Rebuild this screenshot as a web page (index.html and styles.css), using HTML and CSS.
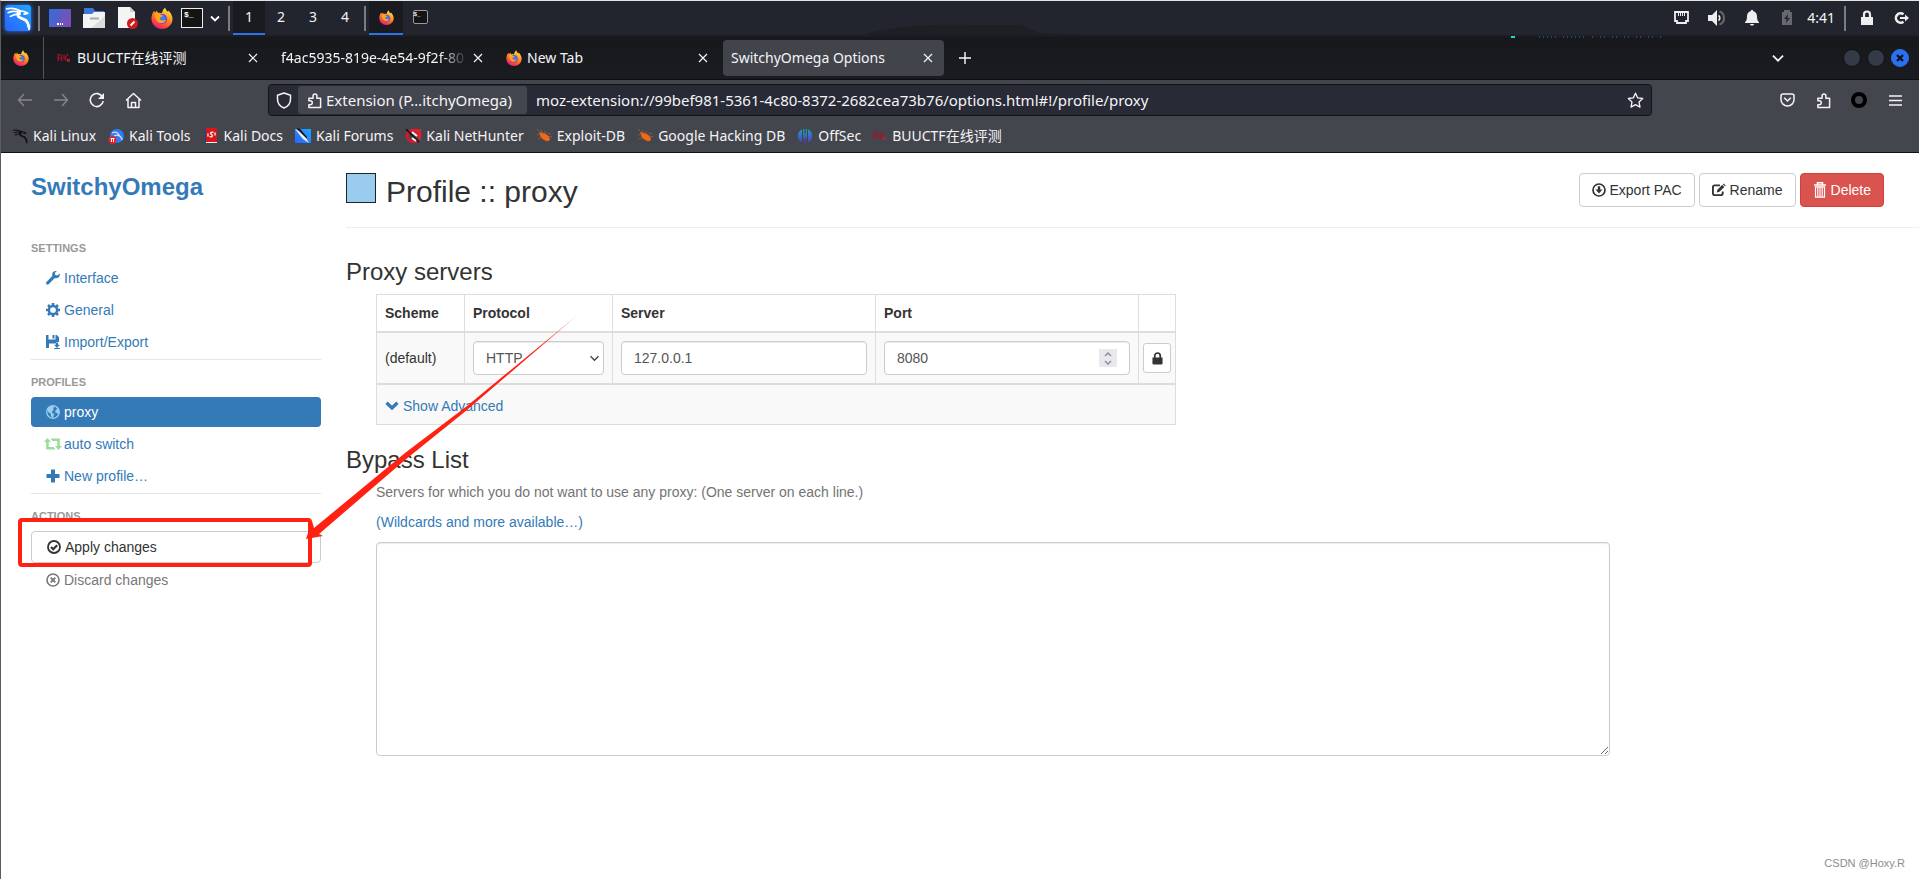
FILE: index.html
```html
<!DOCTYPE html>
<html lang="en">
<head>
<meta charset="utf-8">
<title>SwitchyOmega Options</title>
<link rel="stylesheet" href="styles.css">
</head>
<body>
<svg class="defs" aria-hidden="true">
  <defs>
    <linearGradient id="flame" x1="0.8" y1="0" x2="0.3" y2="1">
      <stop offset="0" stop-color="#fff04a"/><stop offset="0.4" stop-color="#ff9a1f"/><stop offset="0.75" stop-color="#ff4a3d"/><stop offset="1" stop-color="#e31587"/>
    </linearGradient>
    <linearGradient id="desk" x1="0" y1="0" x2="1" y2="0.4">
      <stop offset="0" stop-color="#2f6fdc"/><stop offset="1" stop-color="#7a4fb5"/>
    </linearGradient>
    <linearGradient id="blue" x1="0" y1="1" x2="1" y2="0">
      <stop offset="0" stop-color="#2a62ff"/><stop offset="1" stop-color="#1fa6ff"/>
    </linearGradient>
    <linearGradient id="sec" x1="0" y1="0" x2="0" y2="1">
      <stop offset="0" stop-color="#18a5b5"/><stop offset="1" stop-color="#5b2ed0"/>
    </linearGradient>
    <symbol id="firefox" viewBox="0 0 24 24">
      <path fill="url(#flame)" d="M15.5.5c.2 2.500 1.700 3.500 3 4.800.4-.3.600-.8.600-1.500 2.600 2.800 4.400 6 4.400 9.400C23.500 19.300 18.400 24 12 24S.5 19 .5 12.800c0-3.400 1-6.300 2.900-8.800l1 2.200 2-2.400c.2 1.200.7 2 1.400 2.500 1.500-.3 2.900 0 4 .5C12.500 4.500 13.500 2 15.500.5z"/>
      <circle cx="12" cy="13" r="5.500" fill="#5a4be0"/>
      <path fill="#3f7df0" d="M10 9.500c3-1 6 .5 6.500 3-1 2-4 3-6.500 1.500z"/>
      <path fill="#ffa51f" d="M4.500 7c2.500-.8 4.500 0 5.500 1.300l3 .7c-.3 1.800-2 2-3.300 2.600-.3 1.700 1 3 3 3 1.500 0 2.300-.7 3.500-.2-1 2.800-4.500 4-7.200 2.700C5.500 15.400 4 11 4.500 7z"/>
    </symbol>
    <symbol id="dragon" viewBox="0 0 24 24">
      <g fill="none" stroke="currentColor" stroke-linecap="round" stroke-linejoin="round">
        <path stroke-width="1.600" d="M1.500 3.500C7 2.500 11 3.500 14 6M3 7c4-1.500 8-1.200 11 .3M5 10.500c3-1.800 6-2 9-2"/>
        <path stroke-width="2.600" d="M13 5.500c-1.500 2.500-2 5 1.200 6.300 3.800 1.300 6.800 2.300 7.800 8.200"/>
        <path stroke-width="1.700" d="M13.500 5.500c3-.3 5 .5 7.500 2.200l-3.300.6M19 13.500c1.500 1.500 3 4.500 3.200 9"/>
      </g>
    </symbol>
    <symbol id="close" viewBox="0 0 10 10"><path d="M1 1l8 8M9 1L1 9" fill="none" stroke="currentColor" stroke-width="1.200"/></symbol>
    <symbol id="puzzle" viewBox="0 0 16 18"><path fill="none" stroke="currentColor" stroke-width="1.600" stroke-linejoin="round" d="M2 9.300V6.500h4.500V4a2 2 0 0 1 4 0v2.500H14.500V16.500H2v-3h1.500a2 2 0 0 0 0-4.200z"/></symbol>
    <symbol id="buu" viewBox="0 0 16 12"><path d="M1 1v9M1 2h3M1 6h3M5 2v8M8 2v6M10 3v6M12 1v3" fill="none" stroke="#a3122d" stroke-width="1.500"/><rect x="11.500" y="7" width="3.500" height="3.500" fill="#c01b3a"/></symbol>
    <symbol id="spider" viewBox="0 0 16 16"><path fill="#f06a14" d="M3 4l4 1c3 .5 6 3 7 6l-1 2c-4 0-8-2-9-6z"/><path stroke="#b5622f" stroke-width=".7" fill="none" d="M1 7l4-1M2 11l4-2M5 2l2 4M9 3l0 3M12 5l3 1M12 8l4 1M11 12v2M3 3L1 1"/></symbol>
    <symbol id="wrench" viewBox="0 0 14 14"><path fill="currentColor" d="M13.700 2.600l-2.400 2-2-.5-.6-2L10.800.2C9-.3 7 .5 6.400 2.300c-.3.900-.2 1.700.1 2.500L.7 10.800c-.8.700-.8 1.700-.2 2.400.7.700 1.700.6 2.400-.2l5.900-5.900c.8.300 1.700.3 2.500 0 1.900-.7 2.900-2.700 2.400-4.500z"/></symbol>
    <symbol id="gear" viewBox="0 0 14 14"><circle cx="7" cy="7" r="4.100" fill="none" stroke="currentColor" stroke-width="2.500"/><path d="M7 0v2.500M7 11.500V14M0 7h2.500M11.500 7H14M2 2l1.800 1.800M10.200 10.200L12 12M12 2l-1.800 1.800M3.800 10.200L2 12" stroke="currentColor" stroke-width="2.600"/></symbol>
    <symbol id="save" viewBox="0 0 14 14"><path fill="currentColor" d="M0 0h2.500v4.500h7V0h1.300L13 2.200V7h-3v1.500H3V13H0zM6.500 0h2v3.500h-2z"/><path fill="currentColor" d="M10 7.500h2v2.200h2L11 13 8 9.700h2zM8 13h6v1H8z"/></symbol>
    <symbol id="globe" viewBox="0 0 14 14"><circle cx="7" cy="7" r="6.300" fill="none" stroke="#9ce" stroke-width="1.300"/><path fill="#9ce" d="M1.500 4C3 1.500 5 .9 7 .9L8.500 2 7 3.500l1 1.200-2 1.800.3 1.500 2 1-.8 2L7 13.200 4.700 11l.2-2.200L2 7zM10 1.500l3 3.500.4 2.500L12 9l-1.500-1.300L9 7.500l.5-2L11 4z"/></symbol>
    <symbol id="retweet" viewBox="0 0 18 12"><path fill="#9d9" d="M3.500 0L7 4H4.700v5h5l1.800 2.500H2.200V4H0zM14.500 12L11 8h2.300V3h-5L6.500.5h9.300V8H18z"/></symbol>
    <symbol id="plus" viewBox="0 0 14 14"><path fill="currentColor" d="M5 .5h4V5h4.500v4H9v4.500H5V9H.5V5H5z"/></symbol>
    <symbol id="ok-circle" viewBox="0 0 14 14"><circle cx="7" cy="7" r="6" fill="none" stroke="currentColor" stroke-width="1.800"/><path d="M4 7l2.200 2.200 4-4" fill="none" stroke="currentColor" stroke-width="2.200"/></symbol>
    <symbol id="remove-circle" viewBox="0 0 14 14"><circle cx="7" cy="7" r="6" fill="none" stroke="currentColor" stroke-width="1.600"/><path d="M4.700 4.700l4.600 4.600M9.300 4.700L4.700 9.300" stroke="currentColor" stroke-width="1.900"/></symbol>
    <symbol id="download" viewBox="0 0 14 14"><circle cx="7" cy="7" r="6" fill="none" stroke="currentColor" stroke-width="1.700"/><path fill="currentColor" d="M5.800 3.300h2.400v3.200h2.300L7 10.500 3.500 6.500h2.300z"/></symbol>
    <symbol id="edit" viewBox="0 0 15 14"><path d="M8.500 2H3a2 2 0 0 0-2 2v6.500a2 2 0 0 0 2 2h6.500a2 2 0 0 0 2-2V8.500" fill="none" stroke="currentColor" stroke-width="2"/><path fill="currentColor" d="M5 9.800l.8-3L11 1.500l2.200 2.200L8 9zM11.700.9l.8-.8 2.200 2.100-.8.900z"/></symbol>
    <symbol id="trash" viewBox="0 0 14 16"><path d="M1 3h12M4.500 2.500V.8h5v1.700" fill="none" stroke="currentColor" stroke-width="1.500"/><path d="M2.500 4.800v10.400h9V4.800zM4.800 5v10M7 5v10M9.200 5v10" fill="none" stroke="currentColor" stroke-width="1.200"/></symbol>
    <symbol id="lock" viewBox="0 0 12 14"><path fill="currentColor" d="M.5 6h11v6.500l-1 1h-9l-1-1z"/><path d="M3 6.500V4a3 3 0 0 1 6 0v2.500" fill="none" stroke="currentColor" stroke-width="1.900"/></symbol>
    <symbol id="chevron" viewBox="0 0 12 8"><path d="M1.500 1.500L6 6l4.500-4.500" fill="none" stroke="currentColor" stroke-width="1.600"/></symbol>
    <symbol id="chevron-bold" viewBox="0 0 14 10"><path d="M1.500 1.700L7 7l5.500-5.300" fill="none" stroke="currentColor" stroke-width="3.300"/></symbol>
  </defs>
</svg>

<div class="screen">
  <header class="panel">
    <svg class="ridge" viewBox="0 0 220 12" aria-hidden="true"><path fill="#1e1f25" d="M0 12C30 4 60 1 110 2l50 0 18 8 42 2z"/></svg>
    <button class="launcher kali" aria-label="Applications"><svg width="26" height="26"><use href="#dragon"/></svg></button>
    <span class="bar"></span>
    <div class="launchers">
      <button class="launcher" aria-label="Show desktop"><svg width="22" height="18"><rect width="22" height="18" fill="url(#desk)"/><path d="M8 15h2M11 15h1M13 15h1" stroke="#fff" stroke-width="2"/></svg></button>
      <button class="launcher" aria-label="Files"><svg width="22" height="20"><path fill="#3a78d8" d="M1 0h9l2 3h9v6H1z"/><path fill="#f3f3f3" d="M0 6h9l2-2h11v16H0z"/><path fill="#dcdcdc" d="M22 8v12H8z"/><path d="M7 10.500h9" stroke="#aaa" stroke-width="2"/></svg></button>
      <button class="launcher" aria-label="Text editor"><svg width="22" height="22"><path fill="#f4f4f4" d="M1 0h12l5 5v16H1z"/><path fill="#cfcfcf" d="M13 0l5 5h-5z"/><circle cx="15.500" cy="16.500" r="5.500" fill="#d31919"/><path d="M13.500 18.500l4-4" stroke="#fff" stroke-width="2"/></svg></button>
      <button class="launcher" aria-label="Firefox"><svg width="22" height="22"><use href="#firefox"/></svg></button>
    </div>
    <button class="launcher term" aria-label="Terminal">$_</button>
    <button class="launcher more" aria-label="More terminals"><svg width="10" height="7"><path d="M1 1.500L5 5.500l4-4" fill="none" stroke="#fff" stroke-width="1.800"/></svg></button>
    <span class="bar"></span>
    <nav class="spaces" aria-label="Workspaces">
      <button class="space on">1</button><button class="space">2</button><button class="space">3</button><button class="space">4</button>
    </nav>
    <span class="bar"></span>
    <button class="task on" aria-label="Firefox window"><svg width="15" height="15"><use href="#firefox"/></svg></button>
    <button class="task" aria-label="Terminal window"><span class="mini-term">$_</span></button>
    <div class="tray">
      <svg class="graph" width="152" height="2" aria-hidden="true"><path d="M0 1h4" stroke="#14e0c8" stroke-width="2"/><path d="M28 1h18M52 1h22" stroke="#2b74ee" stroke-dasharray="1 3"/><path d="M81 1h71" stroke="#2b74ee" stroke-dasharray="1 7 1 3"/></svg>
      <button class="tray-icon" aria-label="Network"><svg width="15" height="14"><path d="M1 1h13v9h-2v2H3v-2H1z" fill="none" stroke="#eee" stroke-width="1.800"/><path d="M4.500 1v4M6.500 1v4M8.500 1v4M10.500 1v4" stroke="#eee"/></svg></button>
      <button class="tray-icon" aria-label="Volume"><svg width="18" height="16"><path fill="#eee" d="M0 5h4l5-5v16l-5-5H0z"/><path d="M10.500 5.500c1.700 1 1.700 4 0 5" stroke="#eee" stroke-width="1.600" fill="none"/><path d="M11.500 1.500c6 2 6 11 0 13" stroke="#66686e" stroke-width="2" fill="none"/></svg></button>
      <button class="tray-icon" aria-label="Notifications"><svg width="14" height="16"><path fill="#eee" d="M7 0c1 0 1.300.6 1.400 1.300C11 2 12 4 12 6.500c0 3 .6 4.500 2 5.500v1H0v-1c1.400-1 2-2.500 2-5.500C2 4 3 2 5.600 1.300 5.700.6 6 0 7 0zM5 14h4c0 2-4 2-4 0z"/></svg></button>
      <button class="tray-icon" aria-label="Power"><svg width="12" height="16"><path fill="#66686e" d="M3 0h6v2h2v13H1V2h2z"/><path fill="#23252e" d="M7 4L3 9h2.500L5 13l4-5H6.500z"/></svg></button>
      <time class="clock">4:41</time>
      <span class="bar"></span>
      <button class="tray-icon" aria-label="Lock screen"><svg width="14" height="16"><path fill="#eee" d="M1 7h12v8H1z"/><path d="M4 7V4.500a3 3 0 0 1 6 0V7" fill="none" stroke="#eee" stroke-width="2.200"/></svg></button>
      <button class="tray-icon" aria-label="Log out"><svg width="15" height="14"><path d="M9.500 3.300A4.700 4.700 0 1 0 9.500 10.700" fill="none" stroke="#eee" stroke-width="2.500"/><path fill="#eee" d="M6 6h5V3.500l4 3.500-4 3.500V8H6z"/></svg></button>
    </div>
  </header>

  <div class="tabs">
    <button class="pinned" aria-label="Pinned Firefox tab"><svg width="16" height="16"><use href="#firefox"/></svg></button>
    <div class="tab"><svg class="site" width="13" height="10"><use href="#buu"/></svg><span class="tab-name">BUUCTF在线评测</span><button aria-label="Close tab"><svg width="10" height="10"><use href="#close"/></svg></button></div>
    <div class="tab"><span class="tab-name fade">f4ac5935-819e-4e54-9f2f-80</span><button aria-label="Close tab"><svg width="10" height="10"><use href="#close"/></svg></button></div>
    <div class="tab"><svg class="site" width="16" height="16"><use href="#firefox"/></svg><span class="tab-name">New Tab</span><button aria-label="Close tab"><svg width="10" height="10"><use href="#close"/></svg></button></div>
    <div class="tab current"><span class="tab-name">SwitchyOmega Options</span><button aria-label="Close tab"><svg width="10" height="10"><use href="#close"/></svg></button></div>
    <button class="new-tab" aria-label="New tab"><svg width="12" height="12"><path d="M6 0v12M0 6h12" stroke="#fbfbfe" stroke-width="1.400"/></svg></button>
    <div class="window-tools">
      <button class="list-tabs" aria-label="List all tabs"><svg width="14" height="9"><use href="#chevron"/></svg></button>
      <button class="dot" aria-label="Minimise"></button>
      <button class="dot" aria-label="Maximise"></button>
      <button class="dot quit" aria-label="Close window"><svg width="8" height="8"><path d="M1 1l6 6M7 1L1 7" stroke="#10131c" stroke-width="2.400"/></svg></button>
    </div>
  </div>

  <div class="toolbar">
    <div class="nav-buttons">
      <button class="tool dim" aria-label="Back"><svg width="16" height="14"><path d="M15 7H1.500M7 1L1.500 7 7 13" fill="none" stroke="currentColor" stroke-width="1.400"/></svg></button>
      <button class="tool dim" aria-label="Forward"><svg width="16" height="14"><path d="M1 7h13.500M9 1l5.500 6L9 13" fill="none" stroke="currentColor" stroke-width="1.400"/></svg></button>
      <button class="tool" aria-label="Reload"><svg width="16" height="16"><path d="M13.500 5A6.500 6.500 0 1 0 14.200 9" fill="none" stroke="currentColor" stroke-width="1.600"/><path fill="currentColor" d="M15 1v6H9z"/></svg></button>
      <button class="tool" aria-label="Home"><svg width="17" height="17"><path d="M1 8.500L8.500 1.500 16 8.500M3 7v8.500h11V7M6.500 15.500v-5h4v5" fill="none" stroke="currentColor" stroke-width="1.500" stroke-linejoin="round"/></svg></button>
    </div>
    <div class="address">
      <button class="shield" aria-label="Tracking protection"><svg width="16" height="17"><path d="M8 1l6.500 2.300V7c0 4.500-2.500 7.500-6.500 9-4-1.500-6.500-4.500-6.500-9V3.300z" fill="none" stroke="currentColor" stroke-width="1.500" stroke-linejoin="round"/></svg></button>
      <button class="identity"><svg width="15" height="17"><use href="#puzzle"/></svg>Extension (P…itchyOmega)</button>
      <input class="url" aria-label="Address" value="moz-extension://99bef981-5361-4c80-8372-2682cea73b76/options.html#!/profile/proxy">
      <button class="star" aria-label="Bookmark this page"><svg width="17" height="17"><path d="M8.500 1.200l2.200 4.700 5 .6-3.700 3.500 1 5.100-4.500-2.500L4 15.100l1-5.100L1.300 6.500l5-.6z" fill="none" stroke="currentColor" stroke-width="1.300" stroke-linejoin="round"/></svg></button>
    </div>
    <div class="actions">
      <button class="tool" aria-label="Pocket"><svg width="15" height="14"><path d="M1 3a2 2 0 0 1 2-2h9a2 2 0 0 1 2 2v3.500a6.500 6.500 0 0 1-13 0zM4.200 4.800L7.500 8l3.300-3.200" fill="none" stroke="currentColor" stroke-width="1.500"/></svg></button>
      <button class="tool" aria-label="Extensions"><svg width="15" height="17"><use href="#puzzle"/></svg></button>
      <button class="tool" aria-label="SwitchyOmega"><svg width="16" height="16"><circle cx="8" cy="8" r="6" fill="none" stroke="#000" stroke-width="4"/></svg></button>
      <button class="tool" aria-label="Menu"><svg width="13" height="11"><path d="M0 1h13M0 5.500h13M0 10h13" stroke="currentColor" stroke-width="1.300"/></svg></button>
    </div>
  </div>

  <nav class="bookmarks" aria-label="Bookmarks">
    <a href="#"><svg width="16" height="16" color="#111"><use href="#dragon"/></svg>Kali Linux</a>
    <a href="#"><svg width="16" height="16" viewBox="0 0 16 16"><circle cx="9" cy="8" r="7" fill="#2d7df0"/><path d="M4 5c4-2 6 0 7 2s3 2 3 5M6 8c2-1 4-1 5 0" stroke="#cfe2ff" stroke-width="1.300" fill="none"/><circle cx="4.500" cy="12" r="4" fill="#e3202c"/><path d="M3.500 10v4M5.500 10v4M2.500 10.500h4" stroke="#fff"/></svg>Kali Tools</a>
    <a href="#"><svg width="16" height="16" viewBox="0 0 16 16"><path fill="#1c3f8f" d="M2 1h2v13H2z"/><path fill="#d9161c" d="M3 0h11v14H3z"/><path fill="#eee" d="M3 14h11v1H3z"/><path d="M10.500 4.500c-2-1-4 .5-2 2s0 3-2 2M12 4.500v3M5 5.500v3" stroke="#fff" stroke-width="1.300" fill="none"/></svg>Kali Docs</a>
    <a href="#"><svg width="16" height="16" viewBox="0 0 16 16"><path fill="url(#blue)" d="M0 1h16v14H0z"/><path fill="#111" d="M2 0l3 1 7 8-1 2-7-6z"/><path fill="#f2f2f2" d="M0 1l4 2 7 7 3 5-6-4-4-5z"/></svg>Kali Forums</a>
    <a href="#"><svg width="16" height="16" viewBox="0 0 16 16"><path fill="#e0202f" d="M4 1h12v12z"/><path d="M13 7L8 4C3 2 0 8 4 12c3 3 7 2 9 0" fill="none" stroke="#d3192b" stroke-width="3"/><path d="M1 1l13 13" stroke="#111" stroke-width="1.500"/><path d="M7 4l5 4M7 10l4 3" stroke="#f3f3f3" stroke-width="2"/></svg>Kali NetHunter</a>
    <a href="#"><svg width="16" height="16"><use href="#spider"/></svg>Exploit-DB</a>
    <a href="#"><svg width="16" height="16"><use href="#spider"/></svg>Google Hacking DB</a>
    <a href="#"><svg width="16" height="16" viewBox="0 0 16 16"><path fill="url(#sec)" d="M5 1.500v13C-.5 13-.5 3 5 1.500zM6 1h1.300v9.500H6zM8.700 1H10v9.500H8.700zM7.500 5h1v11h-1zM11 1.500v13c5.500-1.500 5.500-11.500 0-13z"/></svg>OffSec</a>
    <a href="#"><svg width="14" height="10"><use href="#buu"/></svg>BUUCTF在线评测</a>
  </nav>

  <div class="page">
    <aside class="side">
      <a class="brand" href="#">SwitchyOmega</a>
      <section class="group">
        <h2>Settings</h2>
        <a class="item" href="#"><svg width="14" height="14"><use href="#wrench"/></svg>Interface</a>
        <a class="item" href="#"><svg width="14" height="14"><use href="#gear"/></svg>General</a>
        <a class="item" href="#"><svg width="14" height="14"><use href="#save"/></svg>Import/Export</a>
      </section>
      <section class="group">
        <h2>Profiles</h2>
        <a class="item active" href="#"><svg width="14" height="14"><use href="#globe"/></svg>proxy</a>
        <a class="item" href="#"><svg class="broad" width="18" height="12"><use href="#retweet"/></svg>auto switch</a>
        <a class="item" href="#"><svg width="14" height="14"><use href="#plus"/></svg>New profile…</a>
      </section>
      <section class="group">
        <h2>Actions</h2>
        <button class="item apply"><svg width="14" height="14"><use href="#ok-circle"/></svg>Apply changes</button>
        <button class="item discard"><svg width="14" height="14"><use href="#remove-circle"/></svg>Discard changes</button>
      </section>
    </aside>

    <main class="content">
      <header class="head">
        <button class="swatch" aria-label="Profile colour"></button>
        <h1>Profile :: proxy</h1>
        <div class="head-buttons">
          <button class="btn"><svg width="14" height="14"><use href="#download"/></svg>Export PAC</button>
          <button class="btn"><svg width="14" height="14"><use href="#edit"/></svg>Rename</button>
          <button class="btn danger"><svg width="14" height="16"><use href="#trash"/></svg>Delete</button>
        </div>
      </header>

      <h3>Proxy servers</h3>
      <table class="servers">
        <colgroup><col class="c-scheme"><col class="c-protocol"><col class="c-wide"><col class="c-wide"><col class="c-lock"></colgroup>
        <thead><tr><th>Scheme</th><th>Protocol</th><th>Server</th><th>Port</th><th></th></tr></thead>
        <tbody>
          <tr>
            <td>(default)</td>
            <td><div class="field"><select aria-label="Protocol"><option>HTTP</option></select><svg class="arrow" width="11" height="7"><use href="#chevron"/></svg></div></td>
            <td><input type="text" aria-label="Server" value="127.0.0.1"></td>
            <td><div class="field"><input type="number" aria-label="Port" value="8080"><span class="spin"><svg width="8" height="5" viewBox="0 0 8 5"><path d="M1 4l3-3 3 3"/></svg><svg width="8" height="5" viewBox="0 0 8 5"><path d="M1 1l3 3 3-3"/></svg></span></div></td>
            <td class="lock-cell"><button class="btn lock" aria-label="Authentication"><svg width="11" height="13"><use href="#lock"/></svg></button></td>
          </tr>
        </tbody>
        <tbody><tr><td class="advanced" colspan="5"><a href="#"><svg width="14" height="10"><use href="#chevron-bold"/></svg>Show Advanced</a></td></tr></tbody>
      </table>

      <h3>Bypass List</h3>
      <div class="bypass">
        <label for="bypass">Servers for which you do not want to use any proxy: (One server on each line.)</label>
        <a href="#">(Wildcards and more available…)</a>
        <textarea id="bypass"></textarea>
      </div>
    </main>
  </div>

  <svg class="callout" width="600" height="580" aria-hidden="true">
    <defs><linearGradient id="tail" gradientUnits="userSpaceOnUse" x1="579" y1="315" x2="540" y2="347"><stop offset="0" stop-color="#ff2212" stop-opacity="0.300"/><stop offset="1" stop-color="#ff2212"/></linearGradient></defs>
    <rect x="20" y="520" width="290" height="45" rx="2" fill="none" stroke="#ff2212" stroke-width="4"/>
    <path fill="url(#tail)" d="M580 313L467 406 405 453 314 528 312 521 306 539 323 536 319 534 405 460 467 410z"/>
  </svg>
  <div class="credit">CSDN @Hoxy.R</div>
</div>
</body>
</html>
```
FILE: styles.css
```css
* { box-sizing: border-box; }
body { margin: 0; background: #fff; font: 14px/20px "Liberation Sans", Arial, sans-serif; color: #333; }
button { border: 0; padding: 0; background: none; font: inherit; color: inherit; }
a { color: #337ab7; text-decoration: none; }
svg { flex: none; display: block; }
.defs { position: absolute; width: 0; height: 0; }

.screen { position: relative; min-height: 100vh; border-top: 1px solid #dfe6e4; border-left: 1px solid #5c5c5c; overflow: hidden; }

/* Desktop panel */
.panel, .tabs, .toolbar, .bookmarks { font-family: "Noto Sans", "Noto Sans CJK SC", sans-serif; font-size: 14px; color: #f4f4f6; display: flex; align-items: center; }
.panel { position: relative; height: 36px; padding: 0 0 0 4px; background: #23252e; border-bottom: 2px solid #1c1d22; }
.ridge { position: absolute; left: 860px; bottom: 0; width: 220px; }
.launcher { display: flex; }
.kali { margin-right: 4px; background: linear-gradient(45deg, #2a62ff, #1fa6ff); border-radius: 3px; box-shadow: 0 0 4px #2a7cff; color: #fff; }
.bar { width: 2px; height: 25px; margin: 0 3px; background: #7b7c80; }
.launchers { display: flex; align-items: center; gap: 12px; margin: 0 8px 0 6px; }
.term { width: 22px; height: 20px; border: 1px solid #eee; background: #141414; font: bold 8px/12px "Liberation Mono", monospace; color: #fff; padding-left: 2px; }
.more { margin: 0 5px 0 7px; }
.spaces { display: flex; align-self: stretch; }
.space { width: 32px; border-bottom: 2px solid transparent; }
.space.on, .task.on { background: #1a1b20; border-bottom: 2px solid #2b74ee; }
.task { width: 34px; align-self: stretch; display: flex; align-items: center; justify-content: center; border-bottom: 2px solid transparent; }
.mini-term { width: 15px; height: 14px; border: 1px solid #999; border-radius: 2px; background: #141414; font: bold 6px/8px "Liberation Mono", monospace; text-align: left; }
.tray { position: relative; margin-left: auto; display: flex; align-items: center; }
.graph { position: absolute; right: 256px; bottom: -7px; }
.tray-icon { width: 35px; display: flex; justify-content: center; }
.clock { margin: 0 6px 0 3px; }

/* Browser tabs */
.tabs { height: 43px; background: linear-gradient(#17181b, #1b1c21); border-bottom: 1px solid #0e0e11; gap: 4px; }
.pinned { width: 43px; align-self: stretch; padding-left: 12px; border-right: 1px solid #55565b; }
.tab { width: 221px; height: 36px; padding: 0 11px 0 8px; border-radius: 4px; display: flex; align-items: center; gap: 5px; }
.site { width: 16px; }
.tab.current { background: #42444b; }
.tab-name { flex: 1; white-space: nowrap; }
.fade { -webkit-mask-image: linear-gradient(to right, #000 85%, transparent); mask-image: linear-gradient(to right, #000 85%, transparent); }
.new-tab { margin-left: 11px; }
.window-tools { margin-left: auto; display: flex; align-items: center; gap: 6px; padding-right: 10px; }
.list-tabs { margin-right: 52px; }
.dot { width: 18px; height: 18px; border-radius: 50%; background: #353a48; border: 1px solid #0f1014; }
.quit { background: #2a70f0; border-color: #2a70f0; display: flex; align-items: center; justify-content: center; }

/* Address row */
.toolbar { height: 41px; padding: 4px 6px 5px; background: #44464d; font-size: 15px; }
.nav-buttons, .actions { display: flex; }
.tool { width: 36px; height: 32px; display: flex; align-items: center; justify-content: center; }
.dim { color: #85868b; }
.address { flex: 1; margin: 0 117px; height: 32px; display: flex; align-items: center; background: #282a36; border: 1px solid #111217; border-radius: 4px; }
.shield { width: 29px; display: flex; justify-content: center; }
.identity { height: 28px; padding: 0 15px 0 9px; background: #44464f; border-radius: 3px; display: flex; align-items: center; gap: 4px; white-space: nowrap; }
.url { flex: 1; min-width: 0; border: 0; padding: 0 0 0 9px; background: none; font: inherit; color: inherit; }
.star { padding: 0 7px; }

.bookmarks { height: 32px; padding: 0 0 2px 11px; gap: 12px; background: #44464d; border-bottom: 1px solid #111217; white-space: nowrap; }
.bookmarks a { display: flex; align-items: center; gap: 5px; color: #f4f4f6; }

/* Options page */
.page { display: flex; gap: 25px; padding-left: 30px; }
.side { width: 290px; padding-top: 21px; }
.brand { display: block; margin-bottom: 40px; font-size: 24px; line-height: 26px; font-weight: bold; }
.group { display: flex; flex-direction: column; gap: 2px; }
.group + .group { margin-top: 2px; padding-top: 14px; border-top: 1px solid #e5e5e5; }
.group h2 { margin: 0 0 5px; font-size: 11px; line-height: 16px; color: #999; text-transform: uppercase; }
.item { height: 30px; padding: 0 15px; border-radius: 4px; display: flex; align-items: center; gap: 4px; }
.broad { margin: 0 -2px; }
.active { background: #337ab7; color: #fff; }
.apply { height: 32px; border: 1px solid #ccc; color: #333; }
.discard { color: #777; }

.content { flex: 1; min-width: 0; padding-top: 20px; }
.head { display: flex; height: 55px; padding-right: 35px; border-bottom: 1px solid #eee; }
.swatch { width: 30px; height: 30px; background: #9ce; border: 1px solid #222; }
h1 { margin: 0 0 0 10px; font-size: 30px; line-height: 38px; font-weight: normal; }
.head-buttons { margin-left: auto; display: flex; gap: 4px; }
.btn { height: 34px; padding: 0 12px; border: 1px solid #ccc; border-radius: 4px; background: #fff; display: flex; align-items: center; gap: 4px; }
.danger { background: #d9534f; border-color: #d43f3a; color: #fff; }
h3 { margin: 31px 0 9px; font-size: 24px; line-height: 26px; font-weight: normal; }

.servers { width: 800px; max-width: 96%; margin-left: 30px; border-collapse: collapse; table-layout: fixed; }
.c-scheme { width: 88px; }
.c-protocol { width: 148px; }
.c-lock { width: 37px; }
.servers th, .servers td { padding: 8px; border: 1px solid #ddd; text-align: left; vertical-align: middle; }
.servers thead th { border-bottom-width: 2px; }
.servers tbody { background: #f9f9f9; }
.servers tbody + tbody { border-top: 2px solid #ddd; }
.servers td.lock-cell { padding: 0 4px; }
.servers td.advanced { padding: 11px 8px 8px; }
.advanced a { display: flex; align-items: center; gap: 4px; }
.lock { width: 28px; height: 30px; padding: 0; border-radius: 3px; justify-content: center; }
.field { position: relative; }
input[type], select { display: block; width: 100%; height: 34px; padding: 6px 12px; border: 1px solid #ccc; border-radius: 4px; background: #fff; box-shadow: inset 0 1px 1px rgba(0, 0, 0, 0.08); font: inherit; color: #555; appearance: none; }
input[type="number"] { appearance: textfield; -moz-appearance: textfield; }
.arrow { position: absolute; right: 4px; top: 14px; color: #444; }
.spin { position: absolute; right: 13px; top: 8px; width: 18px; height: 18px; background: #e9e9ed; display: flex; flex-direction: column; align-items: center; justify-content: center; gap: 3px; }
.spin path { fill: none; stroke: #8f8f9d; stroke-width: 1.5; }

.servers + h3 { margin-top: 22px; }
.bypass { padding-left: 30px; display: flex; flex-direction: column; align-items: flex-start; gap: 10px; }
.bypass label { color: #737373; }
.bypass textarea { width: 80%; height: 214px; padding: 6px 12px; border: 1px solid #ccc; border-radius: 4px; box-shadow: inset 0 1px 1px rgba(0, 0, 0, 0.08); resize: both; font: inherit; }

.callout { position: absolute; left: -1px; top: -1px; pointer-events: none; }
.credit { position: absolute; right: 14px; bottom: 7px; font-size: 11px; line-height: 18px; color: #8c8c8c; }
```
